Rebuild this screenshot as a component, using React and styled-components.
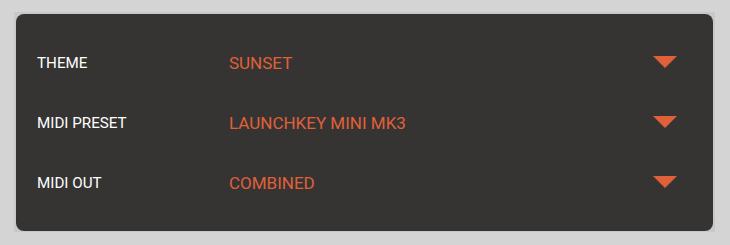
import React from 'react';
import styled, { createGlobalStyle } from 'styled-components';

const GlobalStyle = createGlobalStyle`
	html, body {
		margin: 0;
		padding: 0;
		background: #d4d4d4;
		font-family: Roboto, 'Liberation Sans', sans-serif;
	}
`;

const Page = styled.div`
	width: 730px;
	height: 245px;
	padding: 12px 15px 0 14px;
	box-sizing: border-box;
`;

const Frame = styled.div`
	background: #c8c8c8;
	padding: 2px 2px 1px 2px;
`;

const Panel = styled.div`
	background: #353432;
	border-radius: 8px;
	padding: 19px 0 18px;
	display: flex;
	flex-direction: column;
`;

const Row = styled.div`
	height: 60px;
	display: grid;
	grid-template-columns: 192px 1fr 60px;
	align-items: center;
	padding-left: 21px;
`;

const Label = styled.span`
	color: #ffffff;
	font-size: 15.2px;
	text-transform: uppercase;
`;

const Value = styled.span`
	color: #e0603a;
	font-size: 17px;
	text-transform: uppercase;
`;

const Arrow = styled.svg`
	width: 24px;
	height: 12px;
	justify-self: start;
	margin-bottom: 2px;
`;

const rows = [
	{ label: 'Theme', value: 'Sunset' },
	{ label: 'Midi preset', value: 'Launchkey Mini MK3' },
	{ label: 'Midi out', value: 'Combined' },
];

const App = () => {
	return (
		<>
			<GlobalStyle />
			<Page>
				<Frame>
					<Panel>
						{rows.map((row) => (
							<Row key={row.label}>
								<Label>{row.label}</Label>
								<Value>{row.value}</Value>
								<Arrow viewBox='0 0 24 12'>
									<polygon points='0,0 24,0 12,12' fill='#e0603a' />
								</Arrow>
							</Row>
						))}
					</Panel>
				</Frame>
			</Page>
		</>
	);
};

export default App;
